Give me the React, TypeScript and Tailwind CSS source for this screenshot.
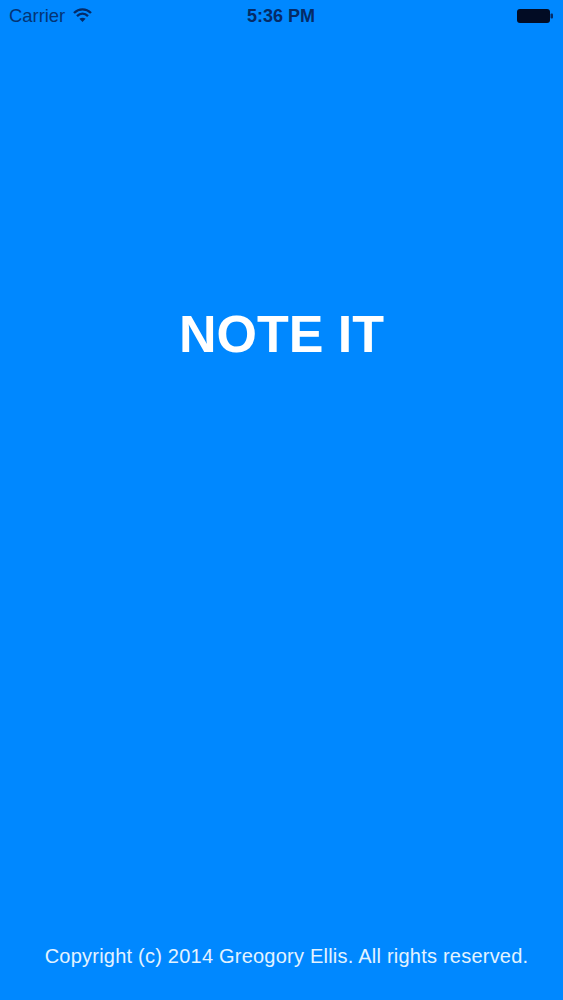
export default function App() {
  return (
    <div className="w-[563px] h-[1000px] bg-[#0088ff] flex flex-col overflow-hidden font-['Liberation_Sans',Arial,sans-serif]">
      <div className="h-[32px] flex items-center justify-between pl-[9px] pr-[10px] text-[#052b66] relative">
        <div className="flex items-center gap-[8px]">
          <span className="text-[18.4px] leading-none opacity-90">Carrier</span>
          <svg width="19" height="14" viewBox="0 0 19 14" fill="none" stroke="#052b66" className="mb-[2px]">
            <path d="M1 5C6 0.2 13 0.2 18 5" strokeWidth="2.4" />
            <path d="M4 8.2C7.3 5 11.7 5 15 8.2" strokeWidth="2.4" />
            <path d="M9.5 14L6.4 10.8C8.3 9.3 10.7 9.3 12.6 10.8Z" fill="#052b66" stroke="none" />
          </svg>
        </div>
        <span className="absolute left-[247px] top-[6px] text-[18px] leading-[20px] font-bold text-[#052b66]">5:36 PM</span>
        <svg width="36" height="14" viewBox="0 0 36 14">
          <rect x="0" y="0" width="33" height="14" rx="3" fill="#020c24" />
          <rect x="33.5" y="4.5" width="2.5" height="5" rx="1" fill="#052b66" />
        </svg>
      </div>
      <div className="h-[272px]" />
      <h1 className="text-center text-[52px] leading-[60px] font-bold text-white">NOTE IT</h1>
      <div className="flex-1" />
      <p className="text-center text-[20px] leading-[24px] text-[#e3f3ff] tracking-[0.225px] pl-[10px] mb-[32px]">
        Copyright (c) 2014 Greogory Ellis. All rights reserved.
      </p>
    </div>
  );
}
